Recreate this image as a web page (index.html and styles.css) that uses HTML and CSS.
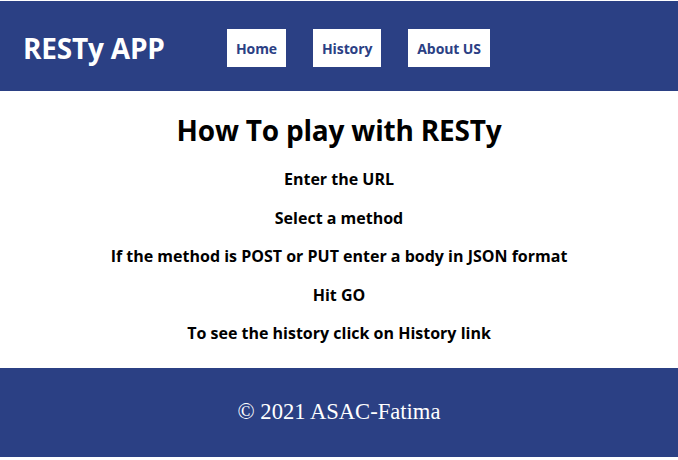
FILE: index.html
```html
<!DOCTYPE html>
<html>
<head>
<meta charset="utf-8">
<link rel="stylesheet" href="styles.css">
</head>
<body>
<header class="top">
  <h1 class="brand">RESTy APP</h1>
  <nav class="nav">
    <a class="nav-link" href="#">Home</a>
    <a class="nav-link" href="#">History</a>
    <a class="nav-link" href="#">About US</a>
  </nav>
</header>
<main class="content">
  <h2 class="title">How To play with RESTy</h2>
  <p class="step">Enter the URL</p>
  <p class="step">Select a method</p>
  <p class="step">If the method is POST or PUT enter a body in JSON format</p>
  <p class="step">Hit GO</p>
  <p class="step">To see the history click on History link</p>
</main>
<footer class="bottom">© 2021 ASAC-Fatima</footer>
</body>
</html>
```
FILE: styles.css
```css
html, body {
  margin: 0;
  padding: 0;
  background: #fff;
}
body {
  padding-top: 1px;
  font-family: "Open Sans", "Noto Sans", sans-serif;
}
.top {
  background: #2b4084;
  height: 86px;
  padding-top: 4px;
  display: flex;
  align-items: center;
  padding-left: 23px;
}
.brand {
  margin: 0;
  color: #fff;
  font-size: 28px;
  font-weight: 700;
  letter-spacing: -0.2px;
  width: 204px;
}
.nav {
  display: flex;
  gap: 27px;
}
.nav-link {
  background: #fff;
  color: #2b4084;
  text-decoration: none;
  font-size: 14px;
  font-weight: 700;
  height: 38px;
  display: flex;
  align-items: center;
  padding: 0 9px;
  letter-spacing: -0.1px;
}
.content {
  text-align: center;
  padding: 20px 0 6px;
}
.title {
  margin: 0 0 20px;
  font-size: 28px;
  font-weight: 700;
  letter-spacing: -0.2px;
}
.step {
  margin: 0 0 17px;
  font-size: 16px;
  font-weight: 700;
  letter-spacing: 0;
  line-height: 21.5px;
}
.bottom {
  background: #2b4084;
  color: #fff;
  height: 89px;
  display: flex;
  align-items: center;
  justify-content: center;
  font-family: "Liberation Serif", serif;
  font-size: 22.6px;
}
```
